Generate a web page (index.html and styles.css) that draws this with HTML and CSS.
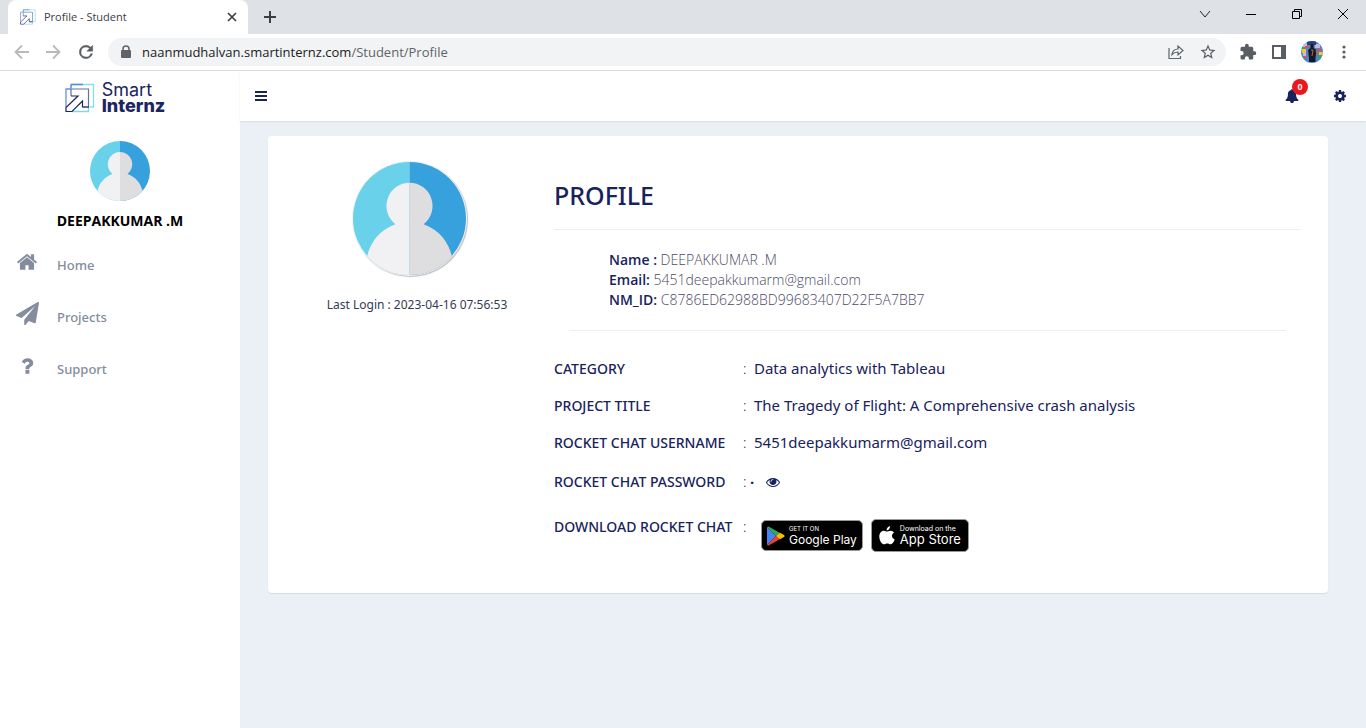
FILE: index.html
```html
<!DOCTYPE html>
<html lang="en">
<head>
<meta charset="utf-8">
<title>Profile - Student</title>
<link rel="stylesheet" href="styles.css">
</head>
<body>
<svg width="0" height="0" class="defs" aria-hidden="true">
  <defs>
    <symbol id="mark" viewBox="0 0 30 30">
      <path d="M6 5.500V1.500h22.500v22.500H25" fill="none" stroke="#7fe3ea" stroke-width="1.300"/>
      <path d="M6 1.500h12M6 1.500v4" fill="none" stroke="#5b86e8" stroke-width="1.300"/>
      <path d="M23.500 24v4.500H7" fill="none" stroke="#7fd8ee" stroke-width="1.300"/>
      <path d="M1 24V6h5" fill="none" stroke="#6590ea" stroke-width="1.300"/>
      <path d="M6 6h17.500v18H18M6 6v7" fill="none" stroke="#6a7096" stroke-width="1.200"/>
      <path d="M6 13h7L1 24.500v4h6L17.500 18v6H24" fill="none" stroke="#1b2560" stroke-width="1.200"/>
    </symbol>
    <symbol id="person" viewBox="0 0 60 60">
      <clipPath id="round"><circle cx="30" cy="30" r="30"/></clipPath>
      <g clip-path="url(#round)">
        <path d="M0 0h30v60H0z" fill="#69d1e9"/>
        <path d="M30 0h30v60H30z" fill="#36a1dd"/>
        <path d="M30 11a12.300 12.300 0 0 0-7.500 22C14 36 9 43 7.500 50L8 60h22z" fill="#f1f1f4"/>
        <path d="M30 11a12.300 12.300 0 0 1 7.500 22C46 36 51 43 52.500 50L52 60H30z" fill="#dedee1"/>
      </g>
    </symbol>
  </defs>
</svg>

<header class="browser">
  <div class="tabs">
    <div class="tab">
      <svg class="favicon" aria-hidden="true"><use href="#mark"/></svg>
      <span class="tab-title">Profile - Student</span>
      <button class="plain" aria-label="Close tab"><svg width="10" height="10" viewBox="0 0 10 10"><path d="M1 1l8 8M9 1L1 9" stroke="#3c4043" stroke-width="1.700"/></svg></button>
    </div>
    <button class="plain new-tab" aria-label="New tab"><svg width="14" height="14" viewBox="0 0 14 14"><path d="M7 1v12M1 7h12" stroke="#3c4043" stroke-width="2"/></svg></button>
    <div class="window-controls">
      <button class="plain" aria-label="Search tabs"><svg width="12" height="12" viewBox="0 0 12 12"><path d="M1 3l5 6 5-6" fill="none" stroke="#222"/></svg></button>
      <button class="plain" aria-label="Minimize"><svg width="12" height="12" viewBox="0 0 12 12"><path d="M1 6.500h10" stroke="#000"/></svg></button>
      <button class="plain" aria-label="Restore"><svg width="12" height="12" viewBox="0 0 12 12"><path d="M1.500 3.500h7v7h-7zM3.500 3V1.500h7v7H9" fill="none" stroke="#000"/></svg></button>
      <button class="plain" aria-label="Close"><svg width="12" height="12" viewBox="0 0 12 12"><path d="M1 1l10 10M11 1L1 11" stroke="#000"/></svg></button>
    </div>
  </div>
  <div class="toolbar">
    <div class="nav-buttons">
      <button class="plain" aria-label="Back"><svg width="16" height="16" viewBox="0 0 16 16"><path d="M15 8H2M8 1.500L1.500 8 8 14.500" fill="none" stroke="#bababd" stroke-width="1.800"/></svg></button>
      <button class="plain" aria-label="Forward"><svg width="16" height="16" viewBox="0 0 16 16"><path d="M1 8h13M8 1.500L14.500 8 8 14.500" fill="none" stroke="#bababd" stroke-width="1.800"/></svg></button>
      <button class="plain" aria-label="Reload"><svg width="20" height="20" viewBox="0 0 24 24"><path fill="#5a5e62" stroke="#5a5e62" stroke-width=".6" d="M17.650 6.350A7.960 7.960 0 0 0 12 4a8 8 0 1 0 7.730 10h-2.080A6 6 0 1 1 12 6c1.660 0 3.140.690 4.220 1.780L13 11h7V4z"/></svg></button>
    </div>
    <div class="address">
      <svg width="14" height="14" viewBox="0 0 14 14" aria-hidden="true"><path d="M4 6V4a3 3 0 0 1 6 0v2" fill="none" stroke="#5f6368" stroke-width="1.500"/><rect x="2" y="5" width="10" height="8" rx="1" fill="#5f6368"/></svg>
      <span class="url">naanmudhalvan.smartinternz.com<span class="path">/Student/Profile</span></span>
      <button class="plain" aria-label="Share"><svg width="16" height="16" viewBox="0 0 16 16"><path d="M1 4v10.500h11.500V12M4 10.500C4.500 7 6.500 5 10 5V2l5 4.500-5 4.500V8C7.500 8 5.500 8.800 4 10.500z" fill="none" stroke="#5f6368" stroke-width="1.200"/></svg></button>
      <button class="plain" aria-label="Bookmark"><svg width="18" height="18" viewBox="0 0 24 24"><path fill="#5a5e62" d="M22 9.240l-7.190-.620L12 2 9.190 8.630 2 9.240l5.460 4.730L5.820 21 12 17.270 18.180 21l-1.630-7.030zM12 15.400l-3.760 2.270 1-4.280-3.320-2.880 4.380-.380L12 6.100l1.710 4.040 4.380.380-3.320 2.880 1 4.280z"/></svg></button>
    </div>
    <div class="tools">
      <button class="plain" aria-label="Extensions"><svg width="18" height="18" viewBox="0 0 24 24"><path fill="#5a5e62" d="M20.500 11H19V7a2 2 0 0 0-2-2h-4V3.500a2.500 2.500 0 0 0-5 0V5H4a2 2 0 0 0-2 2v3.800h1.500a2.700 2.700 0 0 1 0 5.400H2V20a2 2 0 0 0 2 2h3.800v-1.500a2.700 2.700 0 0 1 5.400 0V22H17a2 2 0 0 0 2-2v-4h1.500a2.500 2.500 0 0 0 0-5z"/></svg></button>
      <button class="plain" aria-label="Side panel"><svg width="14" height="14" viewBox="0 0 14 14"><path fill="#5a5e62" fill-rule="evenodd" d="M0 0h14v14H0zM2 2v10h7V2z"/></svg></button>
      <button class="plain" aria-label="Account"><svg width="22" height="22" viewBox="0 0 22 22">
        <clipPath id="acct"><circle cx="11" cy="11" r="11"/></clipPath>
        <g clip-path="url(#acct)"><path fill="#4f86c4" d="M0 0h22v22H0z"/><path fill="#c9b9dc" d="M0 2h6v4H0zM14 3h5v4h-5zM2 12h3v3H2z"/><path fill="#f0c63c" d="M0 8h5v4H1zM18 11h4v3h-4z"/><path fill="#df4e53" d="M4 5h4v2H4zM16 8h5v2h-5zM3 15h3v2H3z"/><path fill="#3a9d72" d="M1 6h3v2H1zM17 15h3v3h-3z"/><path fill="#27407f" d="M6 0h9v4H6z"/><path fill="#15182c" d="M9.500 3h3v4l3 2-1 8v4H8v-4L7 9l2.500-2z"/><path stroke="#b76b33" fill="none" d="M10 9h2l-1 6M15 9l1 6"/></g></svg></button>
      <button class="plain" aria-label="Menu"><svg width="4" height="16" viewBox="0 0 4 16"><g fill="#5a5e62"><circle cx="2" cy="3" r="1.600"/><circle cx="2" cy="8" r="1.600"/><circle cx="2" cy="13" r="1.600"/></g></svg></button>
    </div>
  </div>
</header>

<div class="app">
  <aside class="sidebar">
    <a class="brand" href="#"><svg class="brand-mark" aria-hidden="true"><use href="#mark"/></svg><span class="brand-name">Smart<b>Internz</b></span></a>
    <svg class="avatar-small" aria-hidden="true"><use href="#person"/></svg>
    <p class="user-name">DEEPAKKUMAR .M</p>
    <nav class="menu">
      <a href="#"><svg width="22" height="22" viewBox="0 0 1792 1792"><path d="M1472 992v480q0 26-19 45t-45 19h-384v-384h-256v384h-384q-26 0-45-19t-19-45v-480q0-1 .5-3t.5-3l575-474 575 474q1 2 1 6zm223-69l-62 74q-8 9-21 11h-3q-13 0-21-7l-692-577-692 577q-12 8-24 7-13-2-21-11l-62-74q-8-10-7-23.500t11-21.500l719-599q32-26 76-26t76 26l244 204v-195q0-14 9-23t23-9h192q14 0 23 9t9 23v408l219 182q10 8 11 21.500t-7 23.500z"/></svg><span>Home</span></a>
      <a href="#"><svg width="23" height="23" viewBox="0 0 1792 1792"><path d="M1764 11q33 24 27 64l-256 1536q-5 29-32 45-14 8-31 8-11 0-24-5l-453-185-242 295q-18 23-49 23-13 0-22-4-19-7-30.500-23.500t-11.500-36.500v-349l864-1059-1069 925-395-162q-37-14-40-55-2-40 32-59l1664-960q15-9 32-9 20 0 36 11z"/></svg><span>Projects</span></a>
      <a href="#"><svg width="22" height="22" viewBox="0 0 1792 1792"><path d="M1088 1256v240q0 16-12 28t-28 12h-240q-16 0-28-12t-12-28v-240q0-16 12-28t28-12h240q16 0 28 12t12 28zm316-600q0 54-15.500 101t-35 76.500-55 59.500-57.500 43.500-61 35.500q-41 23-68.500 65t-27.500 67q0 17-12 32.500t-28 15.500h-240q-15 0-25.500-18.500t-10.500-37.500v-45q0-83 65-156.500t143-108.500q59-27 84-56t25-76q0-42-46.500-74t-107.500-32q-65 0-108 29-35 25-107 115-13 16-31 16-12 0-25-8l-164-125q-13-10-15.500-25t5.500-28q160-266 464-266 80 0 161 31t146 83 106 127.500 41 158.500z"/></svg><span>Support</span></a>
    </nav>
  </aside>

  <div class="page">
    <div class="topbar">
      <button class="plain" aria-label="Toggle menu"><svg width="12" height="10" viewBox="0 0 12 10"><path fill="#18225c" d="M0 0h12v2H0zM0 4h12v2H0zM0 8h12v2H0z"/></svg></button>
      <div class="actions">
        <button class="plain bell" aria-label="Notifications"><svg width="14" height="14" viewBox="0 0 1792 1792"><path fill="#18225c" d="M1728 1408q0 52-38 90t-90 38h-448q0 106-75 181t-181 75-181-75-75-181h-448q-52 0-90-38t-38-90q50-42 91-88t85-119.500 74.500-158.500 50-206 19.500-260q0-152 117-282.500t307-158.500q-8-19-8-39 0-40 28-68t68-28 68 28 28 68q0 20-8 39 190 28 307 158.500t117 282.500q0 139 19.500 260t50 206 74.500 158.500 85 119.500 91 88z"/></svg><span class="badge">0</span></button>
        <button class="plain" aria-label="Settings"><svg width="14" height="14" viewBox="0 0 1792 1792"><path fill="#18225c" d="M1152 896q0-106-75-181t-181-75-181 75-75 181 75 181 181 75 181-75 75-181zm512-109v222q0 12-8 23t-20 13l-185 28q-19 54-39 91 35 50 107 138 10 12 10 25t-9 23q-27 37-99 108t-94 71q-12 0-26-9l-138-108q-44 23-91 38-16 136-29 186-7 28-36 28h-222q-14 0-24.500-8.500t-11.500-21.500l-28-184q-49-16-90-37l-141 107q-10 9-25 9-14 0-25-11-126-114-165-168-7-10-7-23 0-12 8-23 15-21 51-66.500t54-70.500q-27-50-41-99l-183-27q-13-2-21-12.500t-8-23.500v-222q0-12 8-23t19-13l186-28q14-46 39-92-40-57-107-138-10-12-10-24 0-10 9-23 26-36 98.500-107.500t94.500-71.500q13 0 26 10l138 107q44-23 91-38 16-136 29-186 7-28 36-28h222q14 0 24.500 8.500t11.500 21.500l28 184q49 16 90 37l142-107q9-9 24-9 13 0 25 10 129 119 165 170 7 8 7 22 0 12-8 23-15 21-51 66.500t-54 70.500q26 50 41 98l183 28q13 2 21 12.500t8 23.500z"/></svg></button>
      </div>
    </div>

    <main class="card">
      <section class="identity">
        <div class="portrait"><svg aria-hidden="true"><use href="#person"/></svg></div>
        <p>Last Login : 2023-04-16 07:56:53</p>
      </section>
      <section class="profile">
        <h1>PROFILE</h1>
        <div class="summary">
          <ul>
            <li><b>Name :</b> DEEPAKKUMAR .M</li>
            <li><b>Email:</b> 5451deepakkumarm@gmail.com</li>
            <li><b>NM_ID:</b> C8786ED62988BD99683407D22F5A7BB7</li>
          </ul>
        </div>
        <table class="details">
          <tr><th scope="row">CATEGORY</th><td class="colon">:</td><td>Data analytics with Tableau</td></tr>
          <tr><th scope="row">PROJECT TITLE</th><td class="colon">:</td><td>The Tragedy of Flight: A Comprehensive crash analysis</td></tr>
          <tr><th scope="row">ROCKET CHAT USERNAME</th><td class="colon">:</td><td>5451deepakkumarm@gmail.com</td></tr>
          <tr class="password"><th scope="row">ROCKET CHAT PASSWORD</th><td class="colon">:</td><td><span class="secret">·<button class="plain" aria-label="Show password"><svg width="14" height="14" viewBox="0 0 1792 1792"><path fill="#18225c" d="M1664 960q-152-236-381-353 61 104 61 225 0 185-131.500 316.500t-316.500 131.500-316.500-131.500-131.500-316.500q0-121 61-225-229 117-381 353 133 205 333.500 326.500t434.500 121.500 434.500-121.500 333.500-326.500zm-720-384q0-20-14-34t-34-14q-125 0-214.500 89.500t-89.500 214.500q0 20 14 34t34 14 34-14 14-34q0-86 61-147t147-61q20 0 34-14t14-34zm848 384q0 34-20 69-140 230-376.500 368.500t-499.500 138.500-499.500-139-376.500-368q-20-35-20-69t20-69q140-229 376.500-368t499.500-139 499.500 139 376.500 368q20 35 20 69z"/></svg></button></span></td></tr>
          <tr class="downloads"><th scope="row">DOWNLOAD ROCKET CHAT</th><td class="colon">:</td><td><div class="stores">
            <a class="store google" href="#"><svg width="18" height="20" viewBox="0 0 18 20" aria-hidden="true"><path fill="#4285f4" d="M0 1v18l9-9z"/><path fill="#34a853" d="M0 1q1-1 2.500 0L13 7l-4 3z"/><path fill="#ea4335" d="M0 19q1 1 2.500 0L13 13l-4-3z"/><path fill="#fbbc04" d="M13 6.800l4 2.200q1.200 1 0 2l-4 2.200L9 10z"/></svg><span><small>GET IT ON</small>Google Play</span></a>
            <a class="store apple" href="#"><svg width="16" height="19" viewBox="0 0 16 19" aria-hidden="true"><path fill="#fff" d="M11 0q.2 3.600-3.400 4.500Q7.500 1 11 0zM8 5.600C9 5.600 10 4.700 11.500 4.700q2.400 0 3.600 1.900c-3.100 1.800-2.600 5.700.6 6.900-.8 2.200-2.300 4.800-4 4.800-1.400 0-1.800-.8-3.400-.8s-2.100.8-3.400.8C2.500 18.300.3 14 .3 10.600c0-3.600 2.200-5.800 4.500-5.800 1.400 0 2.400.8 3.200.8z"/></svg><span><small>Download on the</small>App Store</span></a>
          </div></td></tr>
        </table>
      </section>
    </main>
  </div>
</div>
</body>
</html>
```
FILE: styles.css
```css
* { box-sizing: border-box; }
body {
  margin: 0;
  min-height: 100vh;
  display: flex;
  flex-direction: column;
  font: 14px/20px "Open Sans", sans-serif;
  color: #18225c;
  background: #fff;
}
p, h1, ul { margin: 0; padding: 0; }
a { color: inherit; text-decoration: none; }
svg { display: block; flex: none; }
.defs { position: absolute; }
.plain {
  display: flex;
  align-items: center;
  justify-content: center;
  padding: 0;
  border: 0;
  background: none;
  color: inherit;
}

/* Browser frame */
.browser { border-bottom: 1px solid #dadce0; }
.tabs { display: flex; height: 34px; padding-left: 8px; background: #dee1e6; }
.tab {
  display: flex;
  align-items: center;
  gap: 8px;
  width: 240px;
  padding: 0 11px 0 12px;
  border-radius: 8px 8px 0 0;
  background: #fff;
}
.favicon { width: 16px; height: 16px; }
.tab-title { flex: 1; font-size: 11px; color: #3c4043; }
.new-tab { margin-left: 15px; }
.window-controls { display: flex; align-items: center; margin-left: auto; height: 28px; }
.window-controls button { width: 46px; height: 28px; }
.toolbar { display: flex; align-items: center; height: 36px; padding: 0 20px 0 14px; }
.nav-buttons { display: flex; align-items: center; gap: 15px; width: 94px; }
.address {
  flex: 1;
  display: flex;
  align-items: center;
  gap: 15px;
  height: 28px;
  padding: 0 9px 0 11px;
  border-radius: 14px;
  background: #f1f3f4;
}
.url { flex: 1; margin-left: -6px; font-size: 13px; color: #202124; }
.path { color: #5f6368; }
.tools { display: flex; align-items: center; gap: 15px; margin-left: 13px; }
.tools button:last-child { margin-left: 4px; }

/* Sidebar */
.app { flex: 1; display: flex; background: #ebeff6; }
.sidebar {
  display: flex;
  flex-direction: column;
  align-items: center;
  width: 240px;
  background: #fff;
}
.brand { display: flex; align-items: center; gap: 7px; height: 50px; margin: 2px 10px 18px 0; }
.brand-mark { width: 30px; height: 30px; }
.brand-name { font: 400 18px/16px Inter, sans-serif; color: #1b2560; }
.brand-name b { display: block; font-weight: 800; }
.avatar-small { width: 60px; height: 60px; }
.user-name { margin-top: 10px; font-weight: 700; font-size: 14px; color: #000; }
.menu { align-self: stretch; margin-top: 6px; font: 500 13px/20px "Noto Sans", sans-serif; color: #848c9e; }
.menu a { display: grid; grid-template-columns: 24px 1fr; align-items: center; gap: 18px; height: 52px; padding-left: 15px; }
.menu svg { justify-self: center; margin-bottom: 3px; fill: #848c9e; }
.menu span { padding-top: 4px; }

/* Page */
.page { flex: 1; min-width: 0; }
.topbar {
  display: flex;
  align-items: center;
  justify-content: space-between;
  height: 50px;
  padding: 0 19px 0 15px;
  background: #fff;
  box-shadow: 0 1px 2px rgba(0, 0, 0, .08);
}
.actions { display: flex; gap: 34px; }
.bell { position: relative; }
.badge {
  position: absolute;
  top: -10px;
  left: 7px;
  width: 16px;
  height: 16px;
  border-radius: 50%;
  background: #e8191c;
  color: #fff;
  font-size: 9px;
  font-weight: 700;
  line-height: 16px;
}
.card {
  display: flex;
  align-items: flex-start;
  margin: 15px 38px 0 28px;
  padding: 25px 27px 36px 0;
  border-radius: 4px;
  background: #fff;
  box-shadow: 0 1px 1px rgba(0, 0, 0, .08);
}
.identity {
  display: flex;
  flex-direction: column;
  align-items: center;
  width: 286px;
  padding-left: 12px;
  font: 12px/20px "Noto Sans", sans-serif;
  color: #343a52;
}
.portrait {
  margin: 0 15px 19px 0;
  padding: 1px;
  border-radius: 50%;
  background: #f1f1f3;
  box-shadow: 1px 1px 1px rgba(0, 0, 0, .25);
}
.portrait svg { width: 113px; height: 113px; }
.profile { flex: 1; min-width: 0; }
h1 { padding: 18px 0; border-bottom: 1px solid #eee; font: 500 25px/32px "Noto Sans", sans-serif; }
.summary { margin: 0 15px; padding: 20px 40px; border-bottom: 1px solid #eee; }
.summary ul { list-style: none; font-weight: 300; color: #4c4a66; }
.summary b { font-weight: 600; color: #18225c; }
.details { margin-top: 19px; border-collapse: collapse; font-family: "Noto Sans", sans-serif; }
.details th, .details td { height: 37px; padding: 0 0 2px; text-align: left; font-size: 15px; white-space: nowrap; }
.details th { width: 189px; padding-bottom: 0; font-size: 14px; font-weight: 500; }
.details .colon { width: 11px; padding-bottom: 0; font-size: 14px; font-weight: 300; }
.details .password > * { height: 42px; padding-bottom: 0; }
.secret { display: flex; align-items: center; gap: 12px; margin-left: -4px; font-weight: 700; }
.details .downloads > * { height: 54px; padding-top: 14px; padding-bottom: 0; vertical-align: top; }
.stores { display: flex; align-items: center; gap: 8px; margin: 2px 0 0 7px; }
.store {
  display: flex;
  align-items: center;
  gap: 5px;
  height: 33px;
  padding: 0 6px;
  border: 1px solid #999;
  border-radius: 5px;
  background: #000;
  color: #fff;
  font: 400 12px/13px Inter, sans-serif;
}
.store small { display: block; font-size: 6px; line-height: 8px; }
.google { gap: 4px; height: 31px; padding: 0 5px; }
.apple { padding: 0 7px; font-size: 13px; }
.apple small { font-size: 7px; }
```
